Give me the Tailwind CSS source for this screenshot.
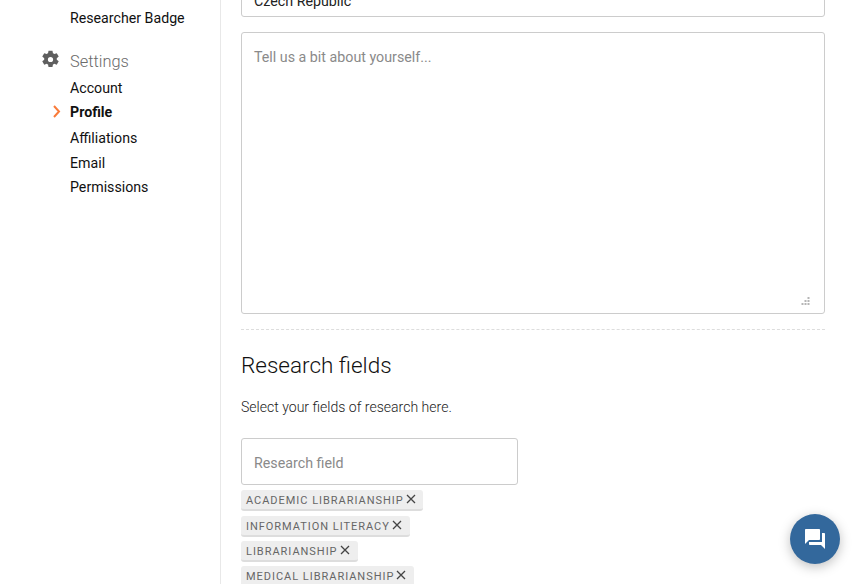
<!DOCTYPE html>
<html lang="en">
<head>
  <meta charset="UTF-8" />
  <title>Profile settings</title>
  <script src="https://cdn.jsdelivr.net/npm/@tailwindcss/browser@4"></script>
</head>
<body class="bg-white h-[584px] overflow-hidden font-['Roboto',sans-serif] text-[#111]">
  <div class="flex h-[584px] overflow-hidden">
    <!-- Sidebar -->
    <aside class="w-[221px] shrink-0 border-r border-[#e8e8e8] pl-[70px] text-[14.2px]">
      <div class="mt-[7px] h-[22px] leading-[22px]">Researcher Badge</div>
      <div class="relative mt-[21px] h-[24px] leading-[24px] text-[16.4px] font-light text-[#6b6b6b]">
        <svg class="absolute left-[-29.500px] top-[0px] w-[19px] h-[19px]" viewBox="0 0 24 24" fill="#5f5f5f"><path fill-rule="evenodd" d="M9.500 1h5l.6 3.200c.6.2 1.200.5 1.700.9l3.100-1.100 2.500 4.300-2.500 2.100c.1.6.1 1.200 0 1.800l2.500 2.100-2.500 4.300-3.100-1.100c-.5.4-1.100.7-1.700.9l-.6 3.200h-5l-.6-3.200c-.6-.2-1.200-.5-1.700-.9l-3.100 1.100-2.500-4.300 2.500-2.100c-.1-.6-.1-1.200 0-1.800L1.600 8.300l2.500-4.300 3.100 1.100c.5-.4 1.100-.7 1.700-.9L9.500 1zM12 15.300a3.300 3.300 0 1 0 0-6.600 3.300 3.300 0 0 0 0 6.600z"/></svg>
        Settings
      </div>
      <ul class="mt-[2px]">
        <li class="h-[24px] leading-[24px]">Account</li>
        <li class="relative h-[24px] leading-[24px] font-bold">
          <svg class="absolute left-[-18px] top-[5px] w-[9px] h-[13px]" viewBox="0 0 9 13" fill="none" stroke="#f97b3a" stroke-width="2"><path d="M2 1l5 5.500-5 5.500"/></svg>
          Profile
        </li>
        <li class="mt-[2px] h-[24px] leading-[24px]">Affiliations</li>
        <li class="mt-[1px] h-[24px] leading-[24px]">Email</li>
        <li class="h-[24px] leading-[24px]">Permissions</li>
      </ul>
    </aside>

    <!-- Main form -->
    <main class="w-[604px] pl-[20px] shrink-0">
      <input class="block w-full h-[47px] mt-[-30px] px-[12px] pt-[15px] rounded-[3px] border border-[#ccc] text-[14.25px] text-[#222]" value="Czech Republic" />
      <div class="relative mt-[15px] h-[282px] rounded-[3px] border border-[#ccc] px-[12px] pt-[14px] text-[14.25px] leading-[20px] text-[#8a8a8a]">
        Tell us a bit about yourself...
        <svg class="absolute right-[14px] bottom-[7px] w-[9px] h-[9px]" viewBox="0 0 9 9" fill="#b5b5b5"><rect x="6.500" y="0" width="2" height="2"/><rect x="3.500" y="3" width="2" height="2"/><rect x="6.500" y="3" width="2" height="2"/><rect x="0.500" y="6" width="2" height="2"/><rect x="3.500" y="6" width="2" height="2"/><rect x="6.500" y="6" width="2" height="2"/></svg>
      </div>
      <div class="mt-[15px] border-t border-dashed border-[#ddd]"></div>
      <h2 class="mt-[20px] text-[22.5px] leading-[30px] font-light text-[#111]">Research fields</h2>
      <p class="mt-[17px] text-[14.05px] leading-[20px] font-light text-[#222]">Select your fields of research here.</p>
      <div class="mt-[21px] w-[277px] h-[47px] rounded-[3px] border border-[#ccc] px-[12px] text-[14.25px] leading-[48px] text-[#8a8a8a]">Research field</div>
      <ul class="mt-[5px] flex flex-col items-start text-[11px] tracking-[0.97px] text-[#666]">
        <li class="flex items-center h-[21px] pl-[5px] pr-[6px] bg-[#eee] rounded-[3px] border-b-2 border-[#ddd]"><span class="mt-[3px]">ACADEMIC LIBRARIANSHIP</span>
          <svg class="ml-[1px] mt-[-1px] w-[12px] h-[12px]" viewBox="0 0 12 12" stroke="#444" stroke-width="1.3"><path d="M2 2l8 8M10 2l-8 8"/></svg>
        </li>
        <li class="mt-[5px] flex items-center h-[21px] pl-[5px] pr-[7px] bg-[#eee] rounded-[3px] border-b-2 border-[#ddd]"><span class="mt-[3px]">INFORMATION LITERACY</span>
          <svg class="ml-[1px] mt-[-1px] w-[12px] h-[12px]" viewBox="0 0 12 12" stroke="#444" stroke-width="1.3"><path d="M2 2l8 8M10 2l-8 8"/></svg>
        </li>
        <li class="mt-[4px] flex items-center h-[21px] pl-[5px] pr-[7px] bg-[#eee] rounded-[3px] border-b-2 border-[#ddd]"><span class="mt-[3px]">LIBRARIANSHIP</span>
          <svg class="ml-[1px] mt-[-1px] w-[12px] h-[12px]" viewBox="0 0 12 12" stroke="#444" stroke-width="1.3"><path d="M2 2l8 8M10 2l-8 8"/></svg>
        </li>
        <li class="mt-[4px] flex items-center h-[21px] pl-[5px] pr-[7px] bg-[#eee] rounded-[3px] border-b-2 border-[#ddd]"><span class="mt-[3px]">MEDICAL LIBRARIANSHIP</span>
          <svg class="ml-[1px] mt-[-1px] w-[12px] h-[12px]" viewBox="0 0 12 12" stroke="#444" stroke-width="1.3"><path d="M2 2l8 8M10 2l-8 8"/></svg>
        </li>
      </ul>
    </main>
  </div>

  <!-- Chat button -->
  <button class="fixed left-[790px] top-[514px] w-[50px] h-[50px] rounded-full bg-[#33689c] shadow-[0_3px_12px_rgba(0,0,0,0.25)] flex items-center justify-center">
    <svg class="w-[24px] h-[24px]" viewBox="0 0 24 24" fill="#fff"><path d="M21 6h-2v9H6v2c0 .55.45 1 1 1h11l4 4V7c0-.55-.45-1-1-1zm-4 6V3c0-.55-.45-1-1-1H3c-.55 0-1 .45-1 1v14l4-4h10c.55 0 1-.45 1-1z"/></svg>
  </button>
</body>
</html>
